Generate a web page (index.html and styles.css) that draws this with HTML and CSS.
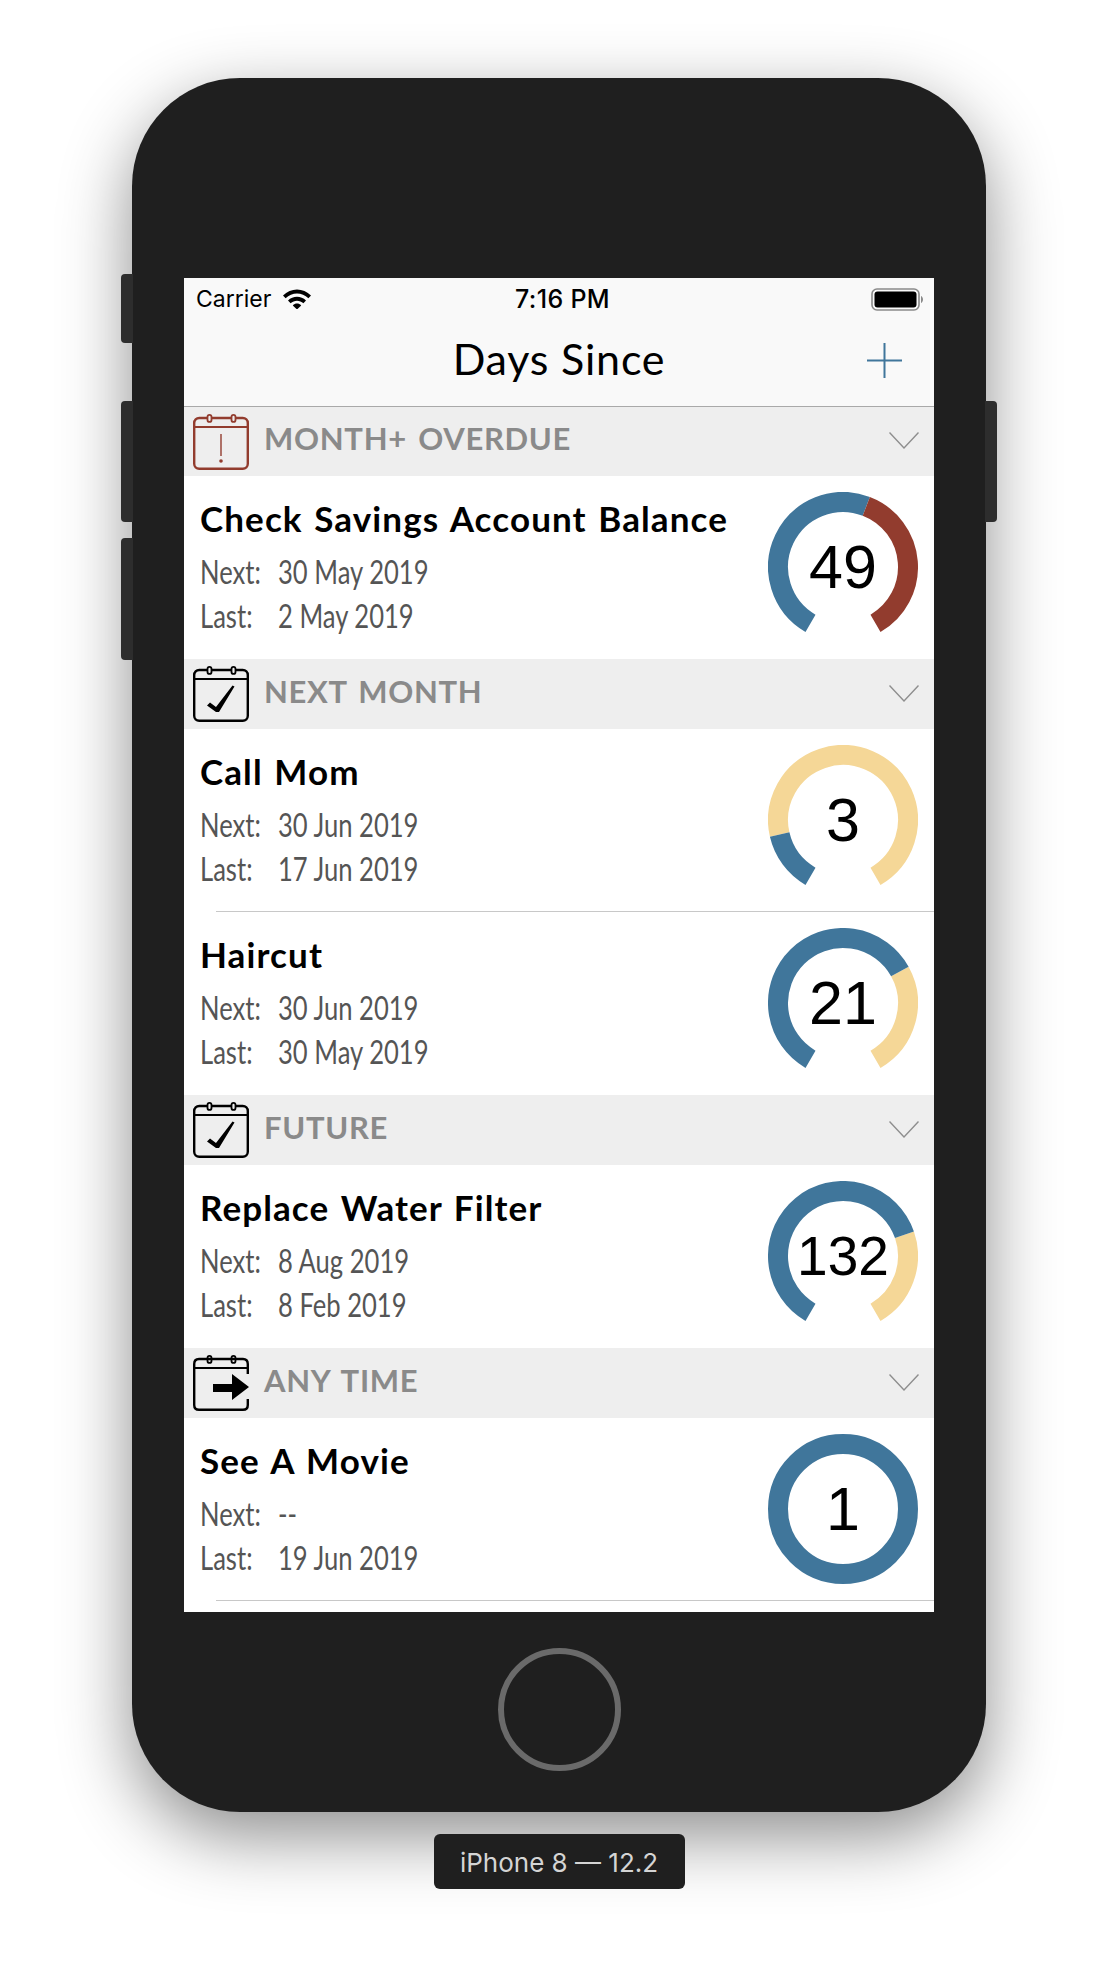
FILE: index.html

```html
<!DOCTYPE html>
<html>
  <head>
    <meta charset="utf-8">
    <title>Days Since</title>
    <link rel="stylesheet" href="styles.css">
  </head>
  <body>
    <svg class="defs" width="0" height="0">
      <symbol id="pins" viewBox="0 0 56 56">
        <path d="M1 13H55" fill="none" stroke="currentColor" stroke-width="2.2"/>
        <rect x="14.5" y="0.9" width="4" height="7" rx="2" fill="#eee" stroke="currentColor" stroke-width="1.8"/>
        <rect x="38.5" y="0.9" width="4" height="7" rx="2" fill="#eee" stroke="currentColor" stroke-width="1.8"/>
      </symbol>
      <symbol id="frame" viewBox="0 0 56 56">
        <rect x="1.2" y="4" width="53.6" height="50.8" rx="5" fill="none" stroke="currentColor" stroke-width="2.4"/>
        <use href="#pins"/>
      </symbol>
      <symbol id="chev" viewBox="0 0 30 17">
        <path d="M0.5 0.5L15 16L29.5 0.5" fill="none" stroke="#8e8e8e" stroke-width="1.4"/>
      </symbol>
    </svg>

    <div class="phone">
      <div class="btn btn-mute"></div>
      <div class="btn btn-up"></div>
      <div class="btn btn-down"></div>
      <div class="btn btn-power"></div>

      <div class="screen">
        <div class="status">
          <div class="status-left">
            <span>Carrier</span>
            <svg class="wifi" viewBox="0 0 28 20">
              <path d="M0 6.5C7.8 -1.6 20.2 -1.6 28 6.5L25.4 9.3C19 2.8 9 2.8 2.6 9.3Z"/>
              <path d="M5 11.6C10 6.6 18 6.6 23 11.6L20.4 14.3C16.8 10.8 11.2 10.8 7.6 14.3Z"/>
              <path d="M9.8 16.4C12.2 14 15.8 14 18.2 16.4L14 20.5Z"/>
            </svg>
          </div>
          <span class="time">7:16 PM</span>
          <svg class="battery" viewBox="0 0 52 23">
            <rect x="1" y="1" width="47" height="21" rx="5" fill="none" stroke="#8a8a8a" stroke-width="1.6"/>
            <rect x="3.5" y="3.5" width="42" height="16" rx="3"/>
            <path d="M50 8C51.4 8.6 52 10 52 11.5C52 13 51.4 14.4 50 15Z" fill="#8a8a8a"/>
          </svg>
        </div>

        <div class="nav">
          <span class="nav-title">Days Since</span>
          <svg class="plus" viewBox="0 0 35 35">
            <path d="M17.5 0V35M0 17.5H35" fill="none" stroke="#40769b" stroke-width="2"/>
          </svg>
        </div>

        <div class="section section-first">
          <svg class="cal cal-red" viewBox="0 0 56 56">
            <use href="#frame"/>
            <path d="M28 20V42" stroke="currentColor" stroke-width="1.4"/>
            <circle cx="28" cy="47" r="1.8" fill="currentColor"/>
          </svg>
          <span class="section-name">MONTH+ OVERDUE</span>
          <svg class="chev"><use href="#chev"/></svg>
        </div>
        <div class="row">
          <div class="info">
            <div class="name">Check Savings Account Balance</div>
            <div class="when"><span class="lbl">Next:</span><span class="val">30 May 2019</span></div>
            <div class="when"><span class="lbl">Last:</span><span class="val">2 May 2019</span></div>
          </div>
          <div class="gauge">
            <svg viewBox="0 0 150 150">
              <path class="arc blue" d="M42.5 131.29A65 65 0 0 1 98.29 14.32"/>
              <path class="arc red" d="M98.29 14.32A65 65 0 0 1 107.5 131.29"/>
            </svg>
            <span class="count">49</span>
          </div>
        </div>

        <div class="section">
          <svg class="cal" viewBox="0 0 56 56">
            <use href="#frame"/>
            <path d="M14 39.5L17 36.5L23 41L39.5 19.5L41.5 20.5L26 46H23Z"/>
          </svg>
          <span class="section-name">NEXT MONTH</span>
          <svg class="chev"><use href="#chev"/></svg>
        </div>
        <div class="row row-lined">
          <div class="info">
            <div class="name">Call Mom</div>
            <div class="when"><span class="lbl">Next:</span><span class="val">30 Jun 2019</span></div>
            <div class="when"><span class="lbl">Last:</span><span class="val">17 Jun 2019</span></div>
          </div>
          <div class="gauge">
            <svg viewBox="0 0 150 150">
              <path class="arc yellow" d="M11.67 89.62A65 65 0 1 1 107.5 131.29"/>
              <path class="arc blue" d="M42.5 131.29A65 65 0 0 1 11.67 89.62"/>
            </svg>
            <span class="count">3</span>
          </div>
        </div>
        <div class="sep"></div>
        <div class="row">
          <div class="info">
            <div class="name">Haircut</div>
            <div class="when"><span class="lbl">Next:</span><span class="val">30 Jun 2019</span></div>
            <div class="when"><span class="lbl">Last:</span><span class="val">30 May 2019</span></div>
          </div>
          <div class="gauge">
            <svg viewBox="0 0 150 150">
              <path class="arc yellow" d="M131.85 43.49A65 65 0 0 1 107.5 131.29"/>
              <path class="arc blue" d="M42.5 131.29A65 65 0 1 1 131.85 43.49"/>
            </svg>
            <span class="count">21</span>
          </div>
        </div>

        <div class="section">
          <svg class="cal" viewBox="0 0 56 56">
            <use href="#frame"/>
            <path d="M14 39.5L17 36.5L23 41L39.5 19.5L41.5 20.5L26 46H23Z"/>
          </svg>
          <span class="section-name">FUTURE</span>
          <svg class="chev"><use href="#chev"/></svg>
        </div>
        <div class="row">
          <div class="info">
            <div class="name">Replace Water Filter</div>
            <div class="when"><span class="lbl">Next:</span><span class="val">8 Aug 2019</span></div>
            <div class="when"><span class="lbl">Last:</span><span class="val">8 Feb 2019</span></div>
          </div>
          <div class="gauge">
            <svg viewBox="0 0 150 150">
              <path class="arc yellow" d="M136.46 53.84A65 65 0 0 1 107.5 131.29"/>
              <path class="arc blue" d="M42.5 131.29A65 65 0 1 1 136.46 53.84"/>
            </svg>
            <span class="count count-long">132</span>
          </div>
        </div>

        <div class="section">
          <svg class="cal" viewBox="0 0 56 56">
            <use href="#pins"/>
            <path d="M54.8 19V9C54.8 5.5 53 4 50 4H6C3 4 1.2 6 1.2 9V50C1.2 53 3 54.8 6 54.8H50C53 54.8 54.8 53 54.8 50V44" fill="none" stroke="currentColor" stroke-width="2.4"/>
            <path d="M20 29H39V19L56 32L39 45V37H20Z"/>
          </svg>
          <span class="section-name">ANY TIME</span>
          <svg class="chev"><use href="#chev"/></svg>
        </div>
        <div class="row row-lined">
          <div class="info">
            <div class="name">See A Movie</div>
            <div class="when"><span class="lbl">Next:</span><span class="val">--</span></div>
            <div class="when"><span class="lbl">Last:</span><span class="val">19 Jun 2019</span></div>
          </div>
          <div class="gauge">
            <svg viewBox="0 0 150 150">
              <circle class="arc blue" cx="75" cy="75" r="65"/>
            </svg>
            <span class="count">1</span>
          </div>
        </div>
        <div class="sep"></div>
      </div>

      <div class="home"></div>
    </div>

    <div class="device-label">iPhone 8 — 12.2</div>
  </body>
</html>
```

FILE: styles.css

```css
html, body {
  margin: 0;
  height: 1962px;
  overflow: hidden;
  background: #fff;
}

.defs {
  display: block;
  height: 0;
}

/* device */
.phone {
  position: relative;
  width: 750px;
  height: 1334px;
  margin: 78px auto 0;
  padding: 200px 52px;
  background: #1f1f1f;
  border-radius: 108px;
  box-shadow: 0 24px 70px rgba(0, 0, 0, 0.45);
}

.btn {
  position: absolute;
  width: 12px;
  background: #2d2d2d;
  border-radius: 4px 0 0 4px;
  left: -11px;
}
.btn-mute { top: 196px; height: 69px; }
.btn-up { top: 323px; height: 121px; }
.btn-down { top: 460px; height: 122px; }
.btn-power {
  top: 323px;
  height: 121px;
  left: auto;
  right: -11px;
  border-radius: 0 4px 4px 0;
}

.screen {
  width: 750px;
  height: 1334px;
  background: #fff;
  overflow: hidden;
}

.home {
  width: 111px;
  height: 111px;
  margin: 36px auto 0;
  border: 6px solid #6a6a6a;
  border-radius: 50%;
}

.device-label {
  width: 251px;
  height: 55px;
  margin: 22px auto 0;
  background: #1f1f1f;
  border-radius: 6px;
  color: #d4d4d4;
  font: 26px/58px Inter, "Liberation Sans", sans-serif;
  text-align: center;
  position: relative;
}

/* status + nav */
.status {
  display: grid;
  grid-template-columns: 1fr auto 1fr;
  align-items: center;
  height: 40px;
  padding: 2px 11px 0 12px;
  box-sizing: border-box;
  background: #f9f9f9;
  font: 23px Inter, "Liberation Sans", sans-serif;
  color: #000;
}
.status-left {
  display: flex;
  align-items: center;
  gap: 12px;
}
.wifi {
  width: 28px;
  height: 20px;
}
.time {
  margin-left: 6px;
  font-size: 25px;
  font-weight: 500;
  letter-spacing: 0.3px;
}
.battery {
  justify-self: end;
  width: 52px;
  height: 23px;
}

.nav {
  display: flex;
  align-items: center;
  justify-content: center;
  height: 88px;
  background: #f9f9f9;
  border-bottom: 1px solid #a9a9a9;
  position: relative;
}
.nav-title {
  margin-bottom: 7px;
  font: 400 43px Lato, "Open Sans", sans-serif;
  letter-spacing: 0.8px;
  color: #000;
}
.plus {
  position: absolute;
  right: 32px;
  top: 25px;
  width: 35px;
  height: 35px;
}

/* list */
.section {
  display: flex;
  align-items: center;
  height: 70px;
  padding: 0 15px 0 9px;
  background: #eee;
}
.section-first {
  height: 69px;
}
.cal {
  flex: none;
  width: 56px;
  height: 56px;
  color: #000;
}
.cal-red {
  color: #923c2e;
}
.section-name {
  flex: 1;
  margin: 0 0 7px 15px;
  font: 700 31px Lato, "Open Sans", sans-serif;
  letter-spacing: 0.7px;
  word-spacing: 3px;
  color: #8a8a8a;
}
.chev {
  width: 30px;
  height: 17px;
  margin-bottom: 2px;
}

.row {
  display: flex;
  justify-content: space-between;
  height: 183px;
  padding: 0 16px;
  box-sizing: border-box;
  background: #fff;
}
.row-lined {
  height: 182px;
}
.info {
  padding-top: 20px;
}
.name {
  font: 700 35px/44px Lato, "Open Sans", sans-serif;
  letter-spacing: 1.1px;
  word-spacing: 2px;
  color: #000;
  margin-bottom: 10px;
}
.when {
  display: flex;
  font: 32px/44px Lato, "Liberation Sans", sans-serif;
  color: #555;
  white-space: nowrap;
}
.lbl {
  width: 78px;
}
/* no condensed face installed, so squeeze the regular one */
.lbl, .val {
  display: inline-block;
  transform: scaleX(0.8);
  transform-origin: left;
}

.gauge {
  display: grid;
  place-items: center;
  width: 150px;
  height: 150px;
  margin-top: 16px;
}
.gauge svg, .count {
  grid-area: 1 / 1;
}
.gauge svg {
  width: 150px;
  height: 150px;
}
.count {
  font: 61px "Liberation Sans", sans-serif;
  color: #000;
}
.count-long {
  font-size: 55px;
}
.arc {
  fill: none;
  stroke-width: 20;
}
.blue { stroke: #40769b; }
.red { stroke: #923c2e; }
.yellow { stroke: #f5d797; }

.sep {
  height: 1px;
  margin-left: 32px;
  background: #c8c8c8;
}
```
